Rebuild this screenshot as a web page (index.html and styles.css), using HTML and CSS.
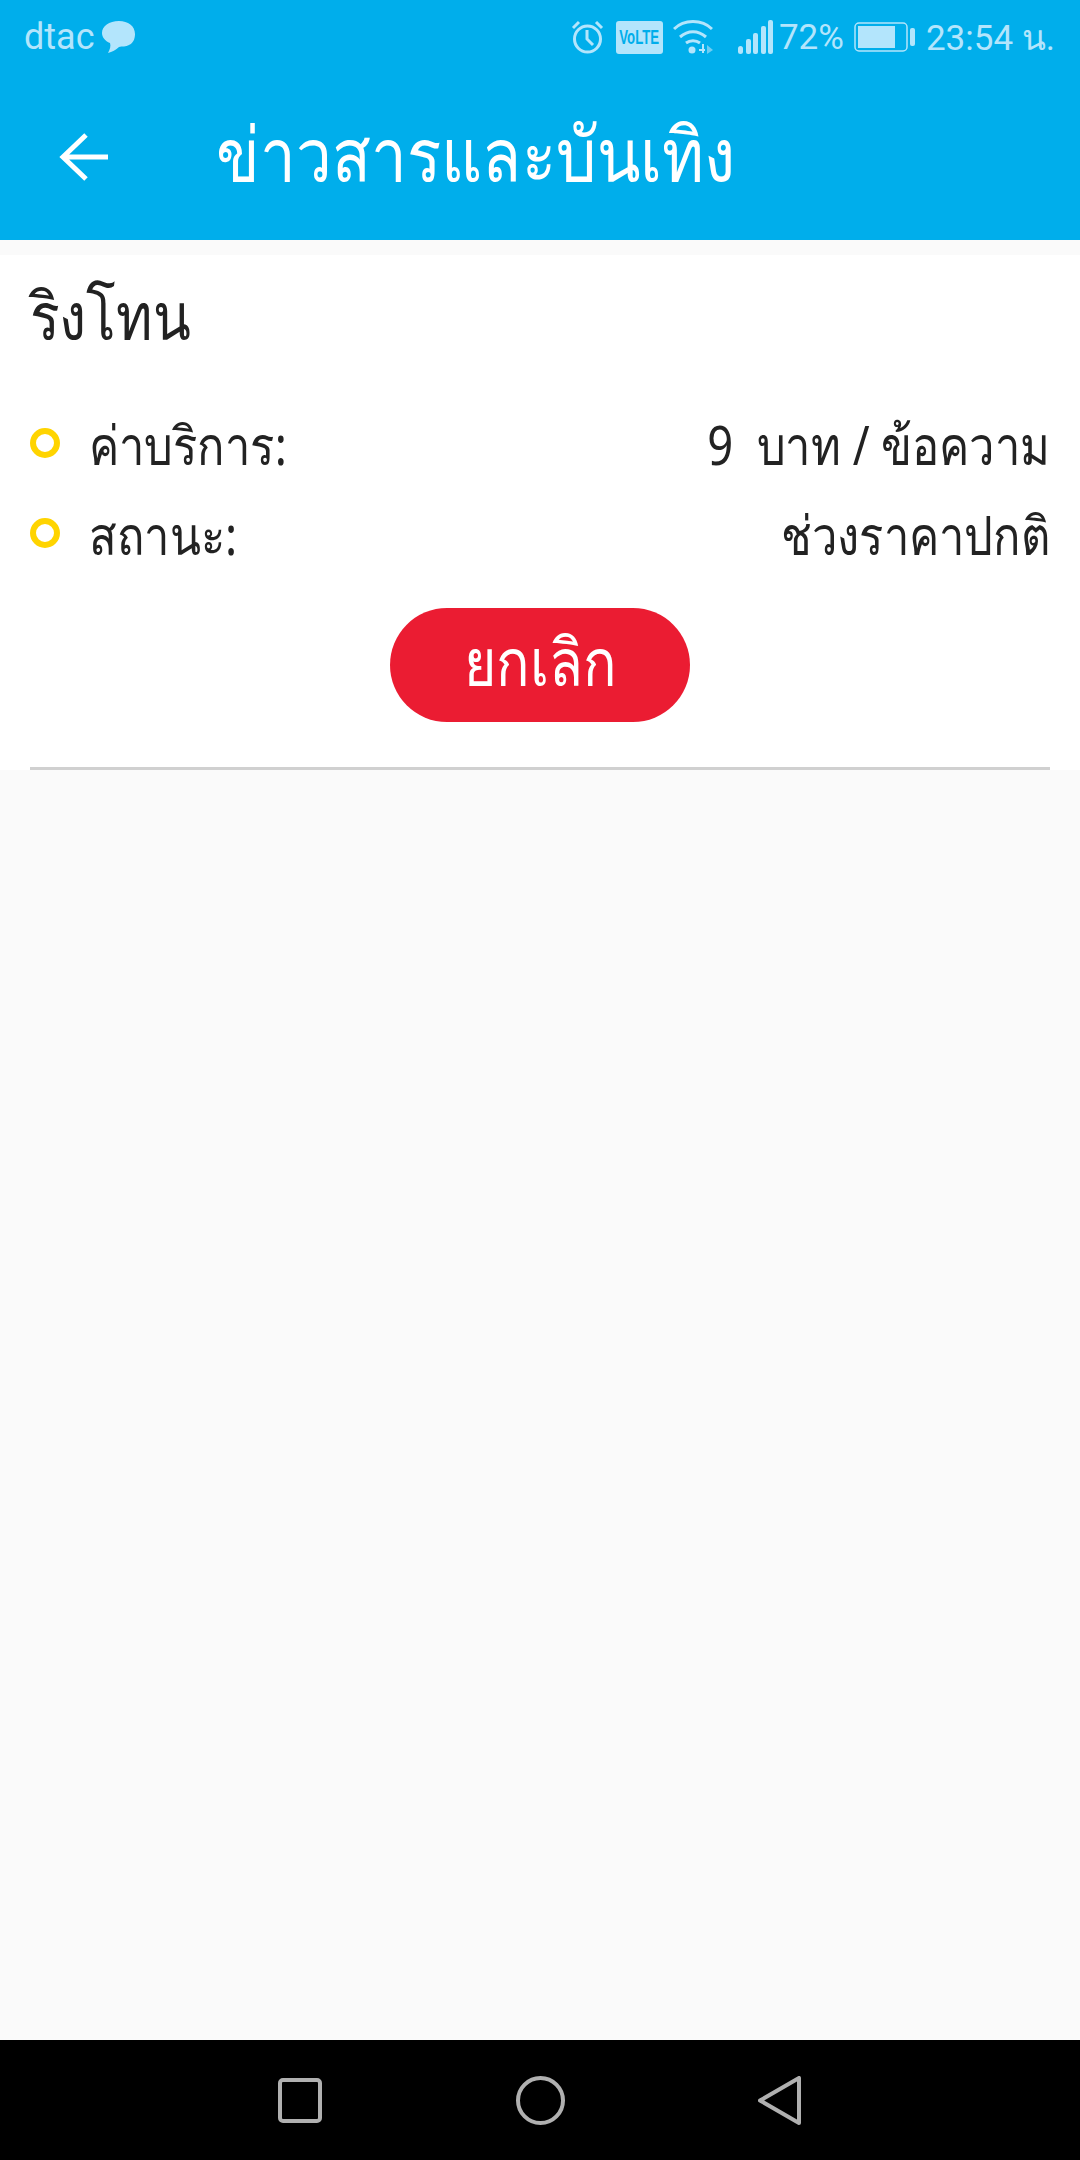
FILE: index.html
```html
<!DOCTYPE html>
<html>
<head>
    <title>ข่าวสารและบันเทิง</title>
    <link rel="stylesheet" href="styles.css">
</head>
<body>
    <div class="screen">
        <header class="header">
            <div class="status-bar">
                <div class="status-left">
                    <span class="carrier">dtac</span>
                    <svg class="icon-chat" width="35" height="34" viewBox="0 0 35 34">
                        <path d="M18 1C8 1 1 6 1 13c0 4 3 8 8 10 1 3 0 6-2 10 4-1 8-3 11-6 3-1 7 0 10-2 4-2 6-6 6-11C34 6 27 1 18 1z" fill="#b3e5fc"/>
                    </svg>
                </div>
                <div class="status-right">
                    <svg class="icon-alarm" width="33" height="34" viewBox="0 0 33 34" fill="none" stroke="#b3e5fc" stroke-width="3">
                        <circle cx="16.5" cy="19" r="13"/>
                        <path d="M16 10v9l6 6M2 8l6-6M31 8l-6-6"/>
                    </svg>
                    <span class="volte"><span class="volte-text">VoLTE</span></span>
                    <svg class="icon-wifi" width="40" height="34" viewBox="0 0 40 34" fill="none" stroke="#b3e5fc" stroke-width="3">
                        <path d="M1 9c10-10 28-10 38 0M7 17c8-7 18-7 26 0M13 23c4-3 10-3 14 0"/>
                        <circle cx="19" cy="30" r="3.5" fill="#b3e5fc" stroke="none"/>
                        <path d="M26 30h6M30 24v9" stroke-width="2"/>
                        <path d="M34 25l6 5-6 4z" fill="#6fcdf2" stroke="none"/>
                    </svg>
                    <svg class="icon-signal" width="35" height="34" viewBox="0 0 35 34" fill="#b3e5fc">
                        <rect x="0" y="26" width="5" height="8" rx="2.5"/>
                        <rect x="8" y="19" width="5" height="15" rx="2"/>
                        <rect x="15" y="13" width="5" height="21" rx="2"/>
                        <rect x="23" y="6" width="5" height="28" rx="2"/>
                        <rect x="30" y="0" width="5" height="34" rx="2"/>
                    </svg>
                    <span class="battery-text">72%</span>
                    <svg class="icon-battery" width="61" height="30" viewBox="0 0 61 30">
                        <rect x="1" y="1" width="52" height="28" rx="4" fill="none" stroke="#b3e5fc" stroke-width="1.5"/>
                        <rect x="4" y="4" width="37" height="22" fill="#b3e5fc"/>
                        <rect x="56" y="6" width="5" height="18" rx="2" fill="#b3e5fc"/>
                    </svg>
                    <span class="clock">23:54 น.</span>
                </div>
            </div>
            <div class="toolbar">
                <svg class="icon-back" width="50" height="50" viewBox="0 0 50 50" fill="none" stroke="#fff" stroke-width="5">
                    <path d="M49 25H4M27 3L4 25l23 22"/>
                </svg>
                <h1 class="title">ข่าวสารและบันเทิง</h1>
            </div>
        </header>

        <main class="content">
            <section class="card">
                <h2 class="card-title">ริงโทน</h2>
                <div class="row">
                    <span class="bullet"></span>
                    <span class="label">ค่าบริการ:</span>
                    <span class="value">9&nbsp; บาท / ข้อความ</span>
                </div>
                <div class="row">
                    <span class="bullet"></span>
                    <span class="label">สถานะ:</span>
                    <span class="value">ช่วงราคาปกติ</span>
                </div>
                <div class="actions">
                    <button class="cancel-btn"><span class="cancel-text">ยกเลิก</span></button>
                </div>
            </section>
        </main>

        <nav class="nav-bar">
            <svg width="44" height="45" viewBox="0 0 44 45" fill="none" stroke="#b0b0b0" stroke-width="4">
                <rect x="2" y="2" width="40" height="41" rx="3"/>
            </svg>
            <svg width="49" height="49" viewBox="0 0 49 49" fill="none" stroke="#b0b0b0" stroke-width="4">
                <circle cx="24.5" cy="24.5" r="22.5"/>
            </svg>
            <svg width="43" height="49" viewBox="0 0 43 49" fill="none" stroke="#b0b0b0" stroke-width="4" stroke-linejoin="round">
                <path d="M41 2v45L2 24.5z"/>
            </svg>
        </nav>
    </div>
</body>
</html>
```

FILE: styles.css
```css
* {
    box-sizing: border-box;
}

body {
    margin: 0;
    font-family: "Noto Sans", "DejaVu Sans", sans-serif;
    background-color: #fafafa;
}

.screen {
    display: flex;
    flex-direction: column;
    height: 2160px;
}

.header {
    height: 240px;
    background-color: #00aeeb;
}

.status-bar {
    display: flex;
    justify-content: space-between;
    align-items: center;
    height: 74px;
    padding: 0 25px 0 24px;
    color: #b3e5fc;
    font-family: Roboto, sans-serif;
    font-size: 35px;
}

.status-left {
    display: flex;
    align-items: center;
    gap: 6px;
}

.carrier {
    font-size: 36px;
}

.status-right {
    display: flex;
    align-items: center;
}

.volte {
    display: flex;
    justify-content: center;
    width: 47px;
    height: 33px;
    margin-left: 12px;
    background-color: #b3e5fc;
    color: #00aeeb;
    border-radius: 3px;
    font-family: "Liberation Sans", sans-serif;
    font-size: 20px;
    font-weight: bold;
    line-height: 33px;
}

.volte-text {
    transform: scaleX(0.66);
}

.icon-wifi {
    margin-left: 10px;
}

.icon-signal {
    margin-left: 25px;
}

.battery-text {
    margin-left: 6px;
}

.icon-battery {
    margin-left: 10px;
}

.clock {
    margin-left: 11px;
}

.toolbar {
    display: flex;
    align-items: center;
    height: 166px;
    padding-left: 59px;
}

.title {
    margin: 0 0 8px 107px;
    color: #fff;
    font-size: 76px;
    font-weight: normal;
    line-height: 100px;
    white-space: nowrap;
    transform: scaleX(0.84);
    transform-origin: left;
}

.content {
    flex: 1;
    padding-top: 15px;
}

.card {
    height: 515px;
    padding: 0 30px;
    background-color: #fff;
}

.card-title {
    height: 143px;
    margin: 0;
    padding-top: 14px;
    color: #222;
    font-size: 66px;
    font-weight: normal;
    line-height: 90px;
    transform: scaleX(0.84);
    transform-origin: left;
}

.row {
    display: flex;
    align-items: center;
    height: 90px;
    color: #222;
    font-size: 54px;
}

.bullet {
    width: 30px;
    height: 30px;
    border: 6px solid #ffd400;
    border-radius: 50%;
}

.label {
    margin-top: 6px;
    margin-left: 29px;
    transform: scaleX(0.84);
    transform-origin: left;
}

.value {
    margin-top: 6px;
    margin-left: auto;
    transform: scaleX(0.84);
    transform-origin: right;
}

.actions {
    display: flex;
    justify-content: center;
    height: 192px;
    padding-top: 30px;
    border-bottom: 3px solid #d0d0d0;
}

.cancel-btn {
    width: 300px;
    height: 114px;
    padding: 0 0 10px;
    background-color: #eb1c32;
    color: #fff;
    border: none;
    border-radius: 57px;
    font-family: inherit;
    font-size: 66px;
    line-height: 104px;
}

.cancel-text {
    display: inline-block;
    transform: scaleX(0.84);
}

.nav-bar {
    display: flex;
    justify-content: space-between;
    align-items: center;
    height: 120px;
    padding: 0 279px 0 278px;
    background-color: #000;
}
```
